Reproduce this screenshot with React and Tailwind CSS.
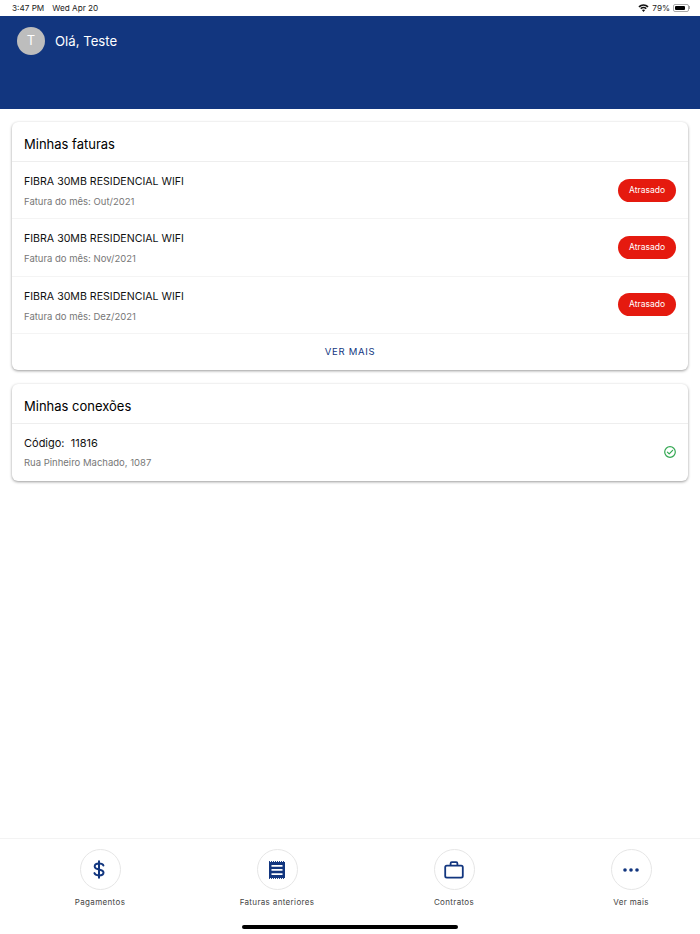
import React from 'react';

const invoices = [
  { id: 1, month: 'Out/2021' },
  { id: 2, month: 'Nov/2021' },
  { id: 3, month: 'Dez/2021' }
];

const DollarIcon = () => (
  <svg width="12" height="19" viewBox="0 0 12 19" fill="none" stroke="#12367f" strokeWidth="2" strokeLinecap="round" strokeLinejoin="round" className="mr-[2px]">
    <path d="M6 1.2v16.6" />
    <path d="M10.4 5.6C10 4.2 8.4 3.5 6 3.5c-2.6 0-4.3 1.1-4.3 2.9 0 2 2 2.5 4.3 3 2.5.5 4.5 1.1 4.5 3.1 0 1.9-1.9 2.9-4.5 2.9-2.5 0-4.200-.8-4.600-2.300" />
  </svg>
);

const ReceiptIcon = () => (
  <svg width="18" height="18" viewBox="0 0 18 18">
    <rect x="1" y="1" width="16" height="16" fill="#12367f" />
    <path d="M1 .6H17M1 17.4H17" stroke="#12367f" strokeWidth="1" strokeDasharray="1 1" />
    <path fill="#fff" d="M3.500 4h11v1.700h-11zM3.500 8.100h11v1.700h-11zM3.500 12.200h11v1.700h-11z" />
  </svg>
);

const BriefcaseIcon = () => (
  <svg width="20" height="18" viewBox="0 0 20 18" fill="none" stroke="#12367f" strokeWidth="1.800" strokeLinejoin="round">
    <rect x="1.200" y="4.600" width="17.600" height="12" rx="1.600" />
    <path d="M6.600 4.600V2.400c0-.7.5-1.200 1.200-1.200h4.400c.7 0 1.200.5 1.200 1.200v2.200" />
  </svg>
);

const DotsIcon = () => (
  <svg width="16" height="4" viewBox="0 0 16 4" fill="#12367f">
    <circle cx="2" cy="2" r="1.800" />
    <circle cx="8" cy="2" r="1.800" />
    <circle cx="14" cy="2" r="1.800" />
  </svg>
);

const CheckIcon = () => (
  <svg width="12" height="12" viewBox="0 0 12 12" fill="none" stroke="#34a853" strokeWidth="1.200" strokeLinecap="round" strokeLinejoin="round">
    <circle cx="6" cy="6" r="5.300" />
    <path d="M3.400 6.100l1.800 1.800 3.400-3.600" />
  </svg>
);

const navItems = [
  { label: 'Pagamentos', icon: <DollarIcon /> },
  { label: 'Faturas anteriores', icon: <ReceiptIcon /> },
  { label: 'Contratos', icon: <BriefcaseIcon /> },
  { label: 'Ver mais', icon: <DotsIcon /> }
];

const StatusBar = () => (
  <div className="flex h-4 items-center justify-between bg-white pl-3 pr-[10px] text-[8.2px] leading-none text-[#222]">
    <div className="flex gap-2">
      <span>3:47 PM</span>
      <span>Wed Apr 20</span>
    </div>
    <div className="flex items-center gap-[3px]">
      <svg width="11" height="8" viewBox="0 0 11 8" fill="#111">
        <path d="M5.500 8L3.900 6.100a2.500 2.500 0 0 1 3.200 0z" />
        <path d="M3.200 5.300L2.200 4.100a5 5 0 0 1 6.600 0l-1 1.200a3.600 3.600 0 0 0-4.600 0z" />
        <path d="M1.500 3.400L.4 2.200a7.800 7.800 0 0 1 10.200 0L9.500 3.400a6.200 6.200 0 0 0-8 0z" />
      </svg>
      <span>79%</span>
      <div className="flex items-center">
        <div className="h-[8px] w-[16px] rounded-[2px] border border-[#aaa] p-[1px]">
          <div className="h-full w-[80%] rounded-[1px] bg-black" />
        </div>
        <div className="h-[3px] w-[1px] bg-[#aaa]" />
      </div>
    </div>
  </div>
);

const App = () => {
  return (
    <div className="flex h-[934px] w-[700px] flex-col overflow-hidden bg-white font-['Inter','Liberation_Sans',sans-serif]">
      <StatusBar />

      <div className="h-[93px] bg-[#12367f] pl-[17px] pt-[11px]">
        <div className="flex items-center gap-[10px]">
          <div className="flex h-7 w-7 items-center justify-center rounded-full bg-[#bdbdbd] text-[13px] text-white">T</div>
          <div className="pt-[2px] text-[13.2px] text-white">Olá, Teste</div>
        </div>
      </div>

      <div className="flex flex-1 flex-col gap-[14px] px-3 pt-[13px]">
        <div className="rounded-md bg-white shadow-[0_1px_3px_rgba(0,0,0,0.4)]">
          <div className="flex h-[40px] items-center border-b border-[#eeeeee] pl-3 pt-[7px] text-[13px] text-black">Minhas faturas</div>
          {invoices.map((invoice) => (
            <div key={invoice.id} className="flex h-[57.33px] items-center justify-between border-b border-[#f4f4f4] pl-3 pr-3">
              <div className="pt-[4px]">
                <div className="text-[10.6px] leading-4 text-[#111]">FIBRA 30MB RESIDENCIAL WIFI</div>
                <div className="mt-[4px] text-[9.5px] leading-4 text-[#777]">Fatura do mês: {invoice.month}</div>
              </div>
              <div className="flex h-[23px] w-[58px] items-center justify-center rounded-full bg-[#e51a0f] text-[8.5px] text-white">Atrasado</div>
            </div>
          ))}
          <div className="flex h-[36px] items-center justify-center text-[9.5px] tracking-[0.7px] text-[#12367f]">VER MAIS</div>
        </div>

        <div className="rounded-md bg-white shadow-[0_1px_3px_rgba(0,0,0,0.4)]">
          <div className="flex h-[40px] items-center border-b border-[#eeeeee] pl-3 pt-[7px] text-[13px] text-black">Minhas conexões</div>
          <div className="flex h-[57px] items-center justify-between pl-3 pr-3">
            <div className="pt-[2px]">
              <div className="whitespace-pre text-[11px] leading-4 text-[#111]">Código:  11816</div>
              <div className="mt-[4px] text-[9.5px] leading-4 text-[#777]">Rua Pinheiro Machado, 1087</div>
            </div>
            <CheckIcon />
          </div>
        </div>
      </div>

      <div className="relative h-[96px] border-t border-[#f3f3f3]">
        <div className="flex gap-[75px] pl-[49px] pt-[10px]">
          {navItems.map((item) => (
            <div key={item.label} className="flex w-[102px] flex-col items-center">
              <div className="flex h-[41px] w-[41px] items-center justify-center rounded-full border border-[#e6e6e6]">{item.icon}</div>
              <div className="mt-[6px] whitespace-nowrap text-[8px] leading-[13px] tracking-[0.35px] text-[#444]">{item.label}</div>
            </div>
          ))}
        </div>
        <div className="absolute bottom-[5px] left-[242px] h-[4px] w-[216px] rounded-full bg-black" />
      </div>
    </div>
  );
};

export default App;
